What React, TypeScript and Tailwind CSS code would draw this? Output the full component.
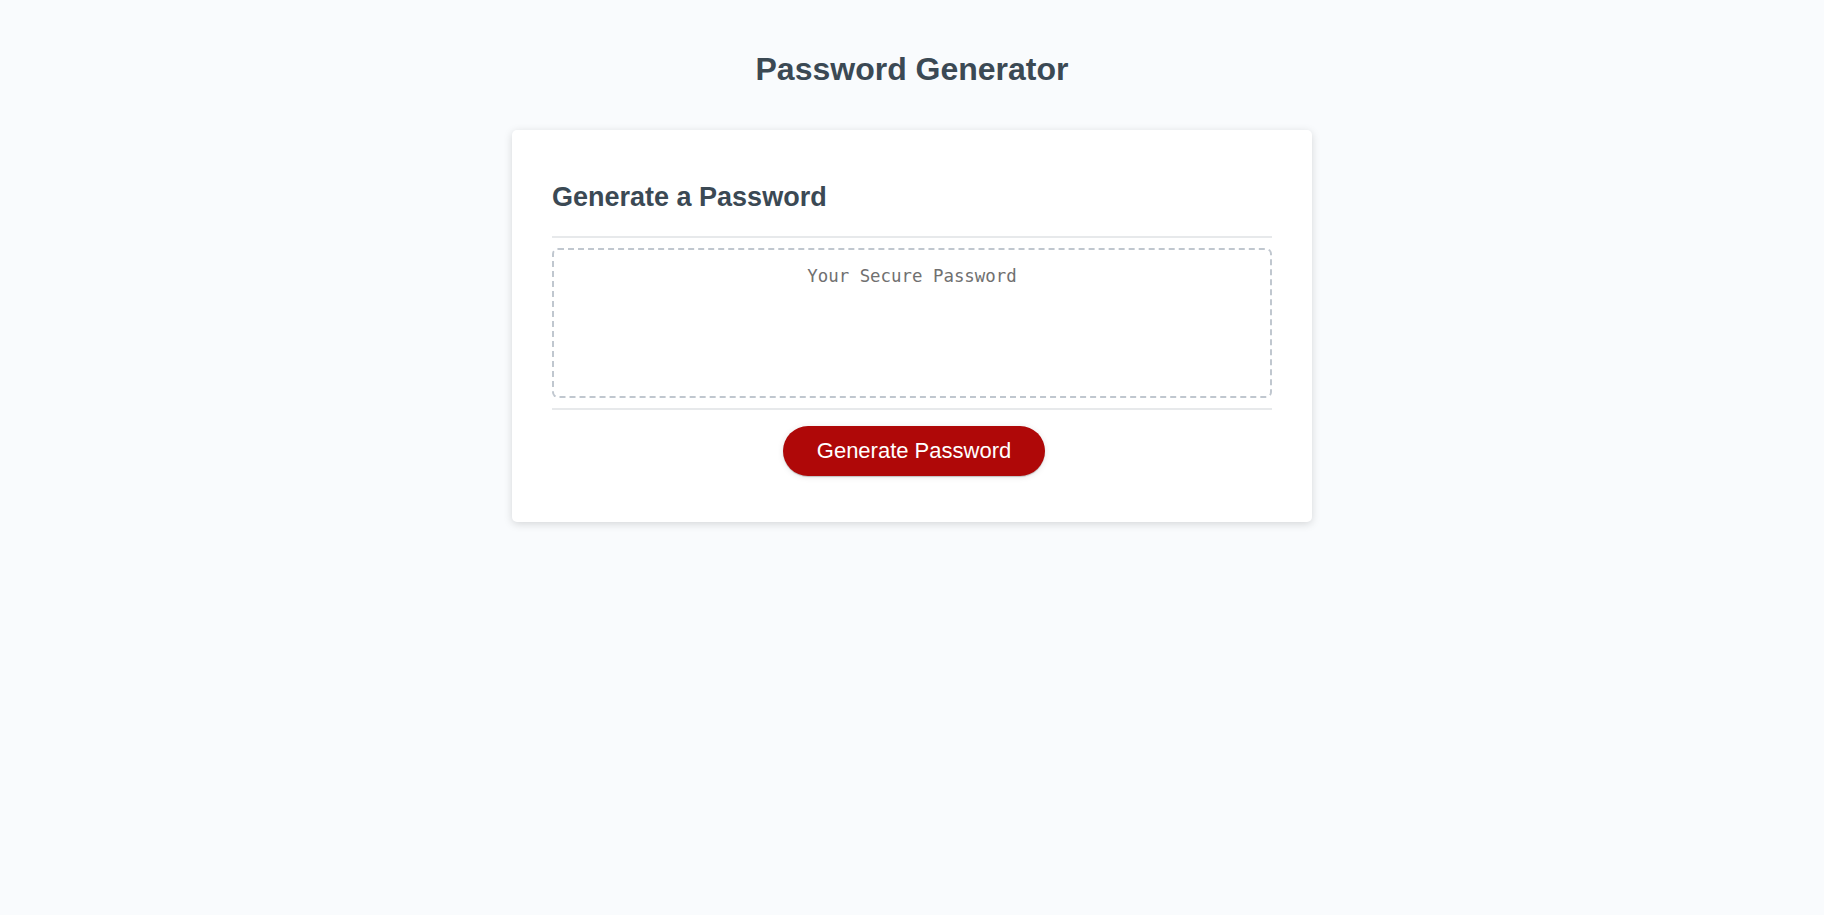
import React, { useState } from 'react';

export default function App() {
  const [password, setPassword] = useState('');

  const generate = () => {
    const chars = 'abcdefghijklmnopqrstuvwxyzABCDEFGHIJKLMNOPQRSTUVWXYZ0123456789!@#$%^&*';
    let out = '';
    for (let i = 0; i < 16; i++) out += chars[Math.floor(Math.random() * chars.length)];
    setPassword(out);
  };

  return (
    <div className="min-h-screen bg-[#f9fbfd] font-['Liberation_Sans',Arial,sans-serif]">
      <div className="px-5 pt-[30px]">
        <header className="pb-5 text-center text-[#3b4954]">
          <h1 className="my-[21.44px] text-[32px] leading-[37px] font-bold">Password Generator</h1>
        </header>
        <div className="mx-auto max-w-[800px] rounded-[5px] bg-white px-10 py-[30px] text-[18px] text-[#3b4954] shadow-[0_2px_8px_0_rgba(0,0,0,0.15)]">
          <div>
            <h2 className="my-[22.4px] text-[27px] leading-[31px] font-bold">Generate a Password</h2>
            <div className="h-[2px] w-full bg-[#e7e9eb]" />
          </div>
          <div className="min-h-[100px]">
            <textarea
              readOnly
              value={password}
              placeholder="Your Secure Password"
              aria-label="Generated Password"
              className="my-[10px] block h-[150px] w-full resize-none appearance-none overflow-hidden rounded-[6px] border-2 border-dashed border-[#c0c7cf] px-[15px] pt-[15px] pb-[85px] text-center font-['DejaVu_Sans_Mono',monospace] text-[17.4px] leading-[23px] text-[#3b4954] outline-none placeholder:text-[#707070]"
            />
          </div>
          <div className="text-center">
            <div className="h-[2px] w-full bg-[#e7e9eb]" />
            <button
              onClick={generate}
              className="mt-4 mr-4 mb-4 ml-5 inline-block cursor-pointer rounded-[25px] bg-[#af0808] px-[34px] py-[14px] text-[22px] leading-[22px] text-white shadow-[0_1px_6px_0_rgba(0,0,0,0.1),0_1px_1px_0_rgba(0,0,0,0.2)]"
            >
              Generate Password
            </button>
          </div>
        </div>
      </div>
    </div>
  );
}
